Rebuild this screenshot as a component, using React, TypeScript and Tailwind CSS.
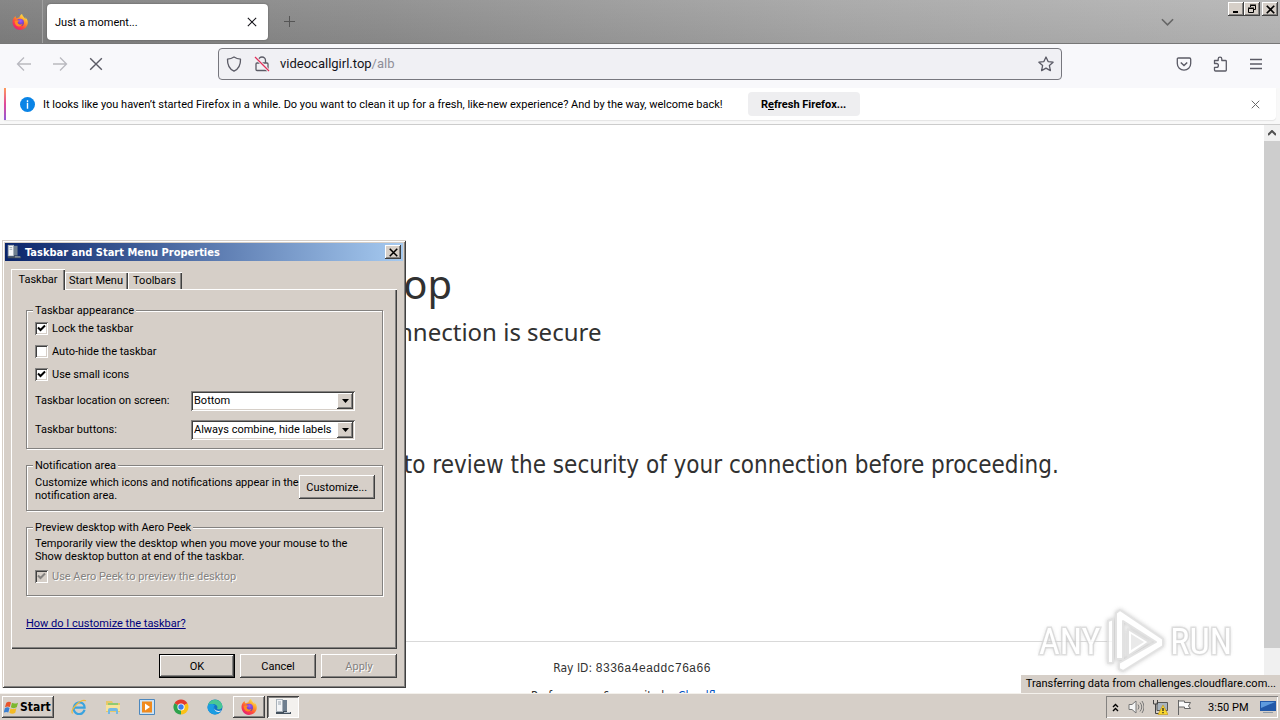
import type { ReactNode } from "react";

const raised =
  "bg-[#d6cfc8] shadow-[inset_-1px_-1px_#404040,inset_1px_1px_#ffffff,inset_-2px_-2px_#848280]";
const windowButton =
  "flex h-[14px] w-4 items-center justify-center bg-[#d6cfc8] shadow-[inset_-1px_-1px_#404040,inset_1px_1px_#ffffff,inset_-2px_-2px_#848280]";

function FirefoxLogo({ className }: { className: string }) {
  return (
    <svg viewBox="0 0 16 16" className={className} aria-hidden="true">
      <defs>
        <linearGradient id="fxBody" x1="0.85" y1="0.05" x2="0.2" y2="1">
          <stop offset="0" stopColor="#fff14f" />
          <stop offset="0.35" stopColor="#ff9a2a" />
          <stop offset="0.65" stopColor="#ff4a3d" />
          <stop offset="1" stopColor="#e3177f" />
        </linearGradient>
        <radialGradient id="fxCore" cx="0.55" cy="0.3" r="0.7">
          <stop offset="0" stopColor="#a05bff" />
          <stop offset="1" stopColor="#5630b5" />
        </radialGradient>
      </defs>
      <path
        d="M15.4 6.2C14.9 5 13.9 3.7 13.1 3.3c.5 1 .7 1.7.7 2C12.600 3.600 10.800 2.800 10 0c-1.800 1-2.500 2.800-2.600 3.600-1 .1-1.900.4-2.500.8C3.900 4 3.500 3 3.600 1.900 2.500 2.600 1.500 3.900.9 5.400c-1.600 5.200 1.800 10.400 7 10.500 5.300.1 9.200-4.700 7.500-9.700z"
        fill="url(#fxBody)"
      />
      <circle cx="8.200" cy="8.400" r="3.700" fill="url(#fxCore)" />
      <path
        d="M2.500 7.500c1.500-1.600 3.600-1.700 5.500-.4-1.700.1-2 .9-2.300 1.600.8 2 3.500 2.300 5 .8-.6 3.600-6.200 4-7.500.3z"
        fill="#ff8a22"
      />
    </svg>
  );
}

function ComputerIcon({ className }: { className: string }) {
  return (
    <svg viewBox="0 0 18 16" className={className} aria-hidden="true">
      <rect x="2.500" y="0.500" width="6" height="12" fill="#f3f5f7" stroke="#a9b2ba" />
      <path d="M4 3h3M4 5h3" stroke="#9aa5b0" />
      <rect x="9" y="1" width="4" height="11" fill="#6f7f8f" />
      <path d="M2 15v-2h7v-1h4v1h4v2z" fill="#43505c" />
      <path d="M10 13.500h6" stroke="#b4bec8" />
    </svg>
  );
}

function Cross({ className, width }: { className: string; width: number }) {
  return (
    <svg viewBox="0 0 12 12" className={className} fill="none" stroke="currentColor" strokeWidth={width} aria-hidden="true">
      <path d="M1 1l10 10M11 1L1 11" />
    </svg>
  );
}

function TitleBar() {
  return (
    <header className="flex h-11 shrink-0 border-b border-[#777] bg-[linear-gradient(182deg,#ffffff26,#00000010),linear-gradient(90deg,#828282,#8c8c8c_30%,#a2a2a2_65%,#aeaeae)]">
      <div className="flex w-[43px] items-center justify-center border-r border-[#a0a0a0] pr-[2px]">
        <FirefoxLogo className="size-4" />
      </div>
      <div className="ml-1 mt-1 flex h-9 w-[221px] items-center justify-between rounded bg-white pl-2 pr-[11px] shadow-[0_0_2px_#555]">
        <span>Just a moment...</span>
        <button aria-label="Close tab" className="text-[#15141a]">
          <Cross className="size-[10px]" width={1.3} />
        </button>
      </div>
      <button aria-label="New tab" className="ml-4 text-[#555]">
        <svg viewBox="0 0 12 12" className="size-3" fill="none" stroke="currentColor" aria-hidden="true">
          <path d="M5.500 0v11M0 5.500h11" />
        </svg>
      </button>
      <button aria-label="List all tabs" className="ml-auto mr-[54px] text-[#666]">
        <svg viewBox="0 0 14 8" className="h-2 w-[13px]" fill="none" stroke="currentColor" strokeWidth="1.700" aria-hidden="true">
          <path d="M1 1l6 6 6-6" />
        </svg>
      </button>
      <div className="mr-[2px] mt-[2px] flex">
        <button aria-label="Minimize" className={windowButton}>
          <svg viewBox="0 0 10 10" className="size-[10px]" aria-hidden="true"><path d="M2 7h5v2H2z" /></svg>
        </button>
        <button aria-label="Restore" className={windowButton}>
          <svg viewBox="0 0 10 10" className="size-[10px]" fill="none" stroke="#000" aria-hidden="true">
            <path d="M3.500 3V1.500h5v4H7M3 1h6M1.500 4.500h5v4h-5zM1 4h6" />
          </svg>
        </button>
        <button aria-label="Close" className={`ml-[2px] ${windowButton}`}>
          <Cross className="size-[9px]" width={2.2} />
        </button>
      </div>
    </header>
  );
}

function NavBar() {
  return (
    <nav className="grid h-11 shrink-0 grid-cols-[218px_minmax(0,1fr)_218px] items-start bg-[#f8f8fb] pt-1 text-[#5b5b66]">
      <div className="flex h-8 items-center gap-5 pl-4">
        <button aria-label="Back" className="text-[#b9b9bf]">
          <svg viewBox="0 0 16 16" className="size-4" fill="none" stroke="currentColor" strokeWidth="1.300" aria-hidden="true"><path d="M15 8H1.500M8 1.500L1.500 8 8 14.500" /></svg>
        </button>
        <button aria-label="Forward" className="text-[#b9b9bf]">
          <svg viewBox="0 0 16 16" className="size-4" fill="none" stroke="currentColor" strokeWidth="1.300" aria-hidden="true"><path d="M1 8h13.500M8 1.500L14.500 8 8 14.500" /></svg>
        </button>
        <button aria-label="Stop" className="pl-px">
          <Cross className="size-[14px]" width={1.2} />
        </button>
      </div>
      <div className="flex h-8 items-center rounded border border-[#77777e] bg-[#f0f0f4] px-[7px]">
        <svg viewBox="0 0 16 16" className="size-4 shrink-0" fill="none" stroke="currentColor" strokeWidth="1.300" aria-hidden="true">
          <path d="M8 1c2 1.300 4 2 6.500 2.200C14.700 9 12.500 13 8 15.200 3.500 13 1.300 9 1.500 3.200 4 3 6 2.300 8 1z" strokeLinejoin="round" />
        </svg>
        <svg viewBox="0 0 16 16" className="ml-3 size-4 shrink-0" fill="none" stroke="currentColor" strokeWidth="1.300" aria-hidden="true">
          <path d="M4.500 7V4.500a3.500 3.500 0 017 0V7M3 7h10q1 0 1 1v5.500q0 1-1 1H3q-1 0-1-1V8q0-1 1-1z" />
          <path d="M1 1l14 14" stroke="#f0f0f4" strokeWidth="3" />
          <path d="M1 1l14 14" stroke="#e2305a" />
        </svg>
        <div className="ml-[10px] min-w-0 flex-1 text-[13px] leading-4 text-[#8f8f98]">
          <span className="text-[#15141a]">videocallgirl.top</span>/alb
        </div>
        <button aria-label="Bookmark this page">
          <svg viewBox="0 0 16 16" className="size-4" fill="none" stroke="currentColor" strokeWidth="1.300" strokeLinejoin="round" aria-hidden="true">
            <path d="M8 1l2.100 4.600 5 .6-3.700 3.400 1 5L8 12.100l-4.400 2.500 1-5L.9 6.200l5-.6z" />
          </svg>
        </button>
      </div>
      <div className="flex h-8 items-center justify-end gap-5 pr-4">
        <button aria-label="Save to Pocket">
          <svg viewBox="0 0 16 16" className="size-4" fill="none" stroke="currentColor" strokeWidth="1.300" aria-hidden="true">
            <path d="M2.500 2h11q1.200 0 1.200 1.200V7.500a6.700 6.700 0 01-13.400 0V3.200Q1.300 2 2.500 2z" />
            <path d="M4.800 6.500L8 9.500l3.200-3" strokeWidth="1.500" />
          </svg>
        </button>
        <button aria-label="Extensions">
          <svg viewBox="0 0 16 16" className="size-4" fill="none" stroke="currentColor" strokeWidth="1.300" strokeLinejoin="round" aria-hidden="true">
            <path d="M2.500 7V4.500h3.700V3a1.800 1.800 0 013.600 0v1.500h3.700q.8 0 .8.800v8.900q0 .8-.8.800h-10q-1 0-1-1v-2.700h2a1.900 1.900 0 000-3.800h-2z" />
          </svg>
        </button>
        <button aria-label="Open application menu">
          <svg viewBox="0 0 16 16" className="size-4" stroke="currentColor" strokeWidth="1.300" aria-hidden="true"><path d="M2 3.500h12M2 8h12M2 12.500h12" /></svg>
        </button>
      </div>
    </nav>
  );
}

function NotificationBar() {
  return (
    <div className="h-[37px] shrink-0 border-b border-[#ccc] bg-[#f8f8f8] pl-1 pr-1">
      <div className="flex h-8 items-center rounded-br bg-white shadow-[0_1px_1px_#e4e4e4]">
        <div className="h-8 w-[2px] bg-[linear-gradient(#ff9a5a,#e0489a,#9059d6)]" />
        <svg viewBox="0 0 16 16" className="ml-[14px] size-[15px]" aria-hidden="true">
          <circle cx="8" cy="8" r="8" fill="#0a84e6" />
          <path d="M8 3.500v2M8 6.500v6" stroke="#fff" strokeWidth="1.500" />
        </svg>
        <p className="ml-2">
          It looks like you haven’t started Firefox in a while. Do you want to clean it up for a fresh, like-new experience? And by the way, welcome back!
        </p>
        <button className="ml-[25px] h-6 w-28 whitespace-nowrap rounded bg-[#eeeef0] text-center font-bold">
          R<span className="underline">e</span>fresh Firefox...
        </button>
        <button aria-label="Dismiss" className="ml-auto mr-4 text-[#666]">
          <Cross className="size-[9px]" width={1.3} />
        </button>
      </div>
    </div>
  );
}

function Watermark() {
  const word =
    "text-white [-webkit-text-stroke:3px_#dedede] [paint-order:stroke_fill] [text-shadow:0_0_4px_#bbb] text-[36px] leading-[48px]";
  return (
    <div className="absolute bottom-[18px] right-12 flex items-center gap-[3px] font-['Roboto_Condensed','Open_Sans_Condensed','Liberation_Sans_Narrow','DejaVu_Sans_Condensed',sans-serif] opacity-80">
      <span className={word}>ANY</span>
      <svg viewBox="0 0 64 66" className="h-[66px] w-16 drop-shadow-[0_0_2px_#bbb]" fill="none" strokeLinejoin="round" aria-hidden="true">
        <path d="M5 54V12l5-2v44z" fill="#fff" stroke="#dcdcdc" strokeWidth="2" />
        <path fillRule="evenodd" d="M13 50V4l4-3 43 29v7L20 62l-4-2v-6l37-21-33-21v38zM25 20l21 13-21 14z" fill="#fff" stroke="#dcdcdc" strokeWidth="2" />
        <path d="M28 25v16l13-8z" fill="#e4e4e4" />
      </svg>
      <span className={word}>RUN</span>
    </div>
  );
}

function WebPage() {
  return (
    <div className="relative flex min-h-0 flex-1 overflow-hidden bg-white">
      <main className="min-w-0 flex-1 whitespace-nowrap pt-[131px] font-['DejaVu_Sans_Condensed','DejaVu_Sans',sans-serif] text-[#313131]">
        <div className="mx-auto w-[960px] max-w-full">
          <div className="font-['Noto_Sans',sans-serif]">
            <h1 className="text-[40px] leading-[56px]">videocallgirl.top</h1>
            <p className="pt-1 text-2xl leading-8">Checking if the site connection is secure</p>
          </div>
          <p className="pt-[101px] text-2xl leading-8">
            videocallgirl.top needs to review the security of your connection before proceeding.
          </p>
        </div>
        <footer className="mx-auto mt-40 w-[960px] max-w-full border-t border-[#d9d9d9] pt-[15px] text-center text-xs leading-[22px]">
          <div>
            Ray ID: <code className="font-['Liberation_Mono',monospace] text-[12px]">8336a4eaddc76a66</code>
          </div>
          <div className="pt-[5px]">
            Performance &amp; security by <a href="#cloudflare" className="text-[#0051c3]">Cloudflare</a>
          </div>
        </footer>
      </main>
      <div className="flex w-4 flex-col bg-[#f0f0f0]">
        <div className="flex h-4 items-center justify-center">
          <svg viewBox="0 0 8 6" className="h-[6px] w-2" fill="none" stroke="#505050" strokeWidth="2" aria-hidden="true"><path d="M0 5l4-4 4 4" /></svg>
        </div>
        <div className="h-[507px] bg-[#cdcdcd]" />
      </div>
      <Watermark />
      <div className="absolute bottom-0 right-0 h-[18px] whitespace-nowrap bg-[#d6cfc8] pl-[5px] pr-1 leading-[18px]">
        Transferring data from challenges.cloudflare.com...
      </div>
    </div>
  );
}

function Check({ id, label, checked, disabled }: { id: string; label: string; checked?: boolean; disabled?: boolean }) {
  return (
    <div className="flex items-center gap-1">
      <span className="grid">
        <input
          id={id}
          type="checkbox"
          defaultChecked={checked}
          disabled={disabled}
          className="peer col-start-1 row-start-1 size-[13px] appearance-none bg-white shadow-[inset_1px_1px_#848280,inset_-1px_-1px_#fff,inset_2px_2px_#404040,inset_-2px_-2px_#d6cfc8] disabled:bg-[#d6cfc8]"
        />
        <svg viewBox="0 0 13 13" className="pointer-events-none invisible col-start-1 row-start-1 size-[13px] text-black peer-checked:visible peer-disabled:text-[#848280]" fill="none" stroke="currentColor" strokeWidth="2" aria-hidden="true">
          <path d="M3 5.500l2.500 2.500L10 3.500" />
        </svg>
      </span>
      <label htmlFor={id} className={disabled ? "text-[#848280] [text-shadow:1px_1px_#fff]" : ""}>{label}</label>
    </div>
  );
}

function Combo({ id, label, options }: { id: string; label: string; options: string[] }) {
  return (
    <div className="flex h-[29px] items-center">
      <label htmlFor={id} className="w-[156px]">{label}</label>
      <span className="grid w-[164px] grid-cols-[minmax(0,1fr)] items-center">
        <select id={id} className="col-start-1 row-start-1 h-5 w-full appearance-none bg-white pl-[3px] pr-[18px] leading-[13px] shadow-[inset_1px_1px_#848280,inset_-1px_-1px_#fff,inset_2px_2px_#404040,inset_-2px_-2px_#d6cfc8]">
          {options.map((o) => <option key={o}>{o}</option>)}
        </select>
        <span className={`pointer-events-none col-start-1 row-start-1 mr-[2px] flex h-4 w-4 items-center justify-center justify-self-end ${raised}`}>
          <svg viewBox="0 0 7 4" className="h-1 w-[7px]" aria-hidden="true"><path d="M0 0h7L3.500 4z" /></svg>
        </span>
      </span>
    </div>
  );
}

function Group({ title, className, children }: { title: string; className: string; children: ReactNode }) {
  return (
    <fieldset className={`min-w-0 border border-[#848280] px-2 shadow-[1px_1px_#fff,inset_1px_1px_#fff] ${className}`}>
      <legend className="-ml-[2px] bg-[#d6cfc8] px-[2px]">{title}</legend>
      {children}
    </fieldset>
  );
}

function PropertiesDialog() {
  const tab = "h-[17px] whitespace-nowrap pr-px shadow-[inset_1px_1px_#fff,inset_-1px_0_#404040,inset_-2px_0_#848280]";
  const button = `h-6 w-[76px] text-center ${raised}`;
  return (
    <section
      aria-label="Taskbar and Start Menu Properties"
      className="absolute left-[2px] top-[240px] w-[404px] bg-[#d6cfc8] p-[3px] leading-[13px] shadow-[inset_1px_1px_#d6cfc8,inset_-1px_-1px_#404040,inset_2px_2px_#fff,inset_-2px_-2px_#848280]"
    >
      <div className="flex h-[18px] items-center bg-[linear-gradient(90deg,#0a246a,#a6caf0)] pl-px pr-[2px] font-bold text-white">
        <ComputerIcon className="h-4 w-4" />
        <h2 className="ml-[3px] flex-1 font-['DejaVu_Sans_Condensed','DejaVu_Sans',sans-serif]">Taskbar and Start Menu Properties</h2>
        <button aria-label="Close dialog" className={`${windowButton} text-black`}>
          <Cross className="size-[9px]" width={2} />
        </button>
      </div>
      <div className="px-[6px] pb-[7px] pt-2">
        <div role="tablist" className="flex items-end">
          <button role="tab" aria-selected="true" className="relative -mb-px h-[21px] w-[54px] bg-[#d6cfc8] pb-px shadow-[inset_1px_1px_#fff,inset_-1px_0_#404040,inset_-2px_0_#848280]">Taskbar</button>
          <button role="tab" aria-selected="false" className={`w-[63px] ${tab}`}>Start Menu</button>
          <button role="tab" aria-selected="false" className={`w-[54px] ${tab}`}>Toolbars</button>
        </div>
        <div className="flex flex-col gap-[10px] pb-[19px] pl-[15px] pr-[14px] pt-[15px] shadow-[inset_1px_1px_#fff,inset_-1px_-1px_#404040,inset_-2px_-2px_#848280]">
          <Group title="Taskbar appearance" className="pb-1">
            <div className="grid auto-rows-[23px] items-center">
              <Check id="lock" label="Lock the taskbar" checked />
              <Check id="autohide" label="Auto-hide the taskbar" />
              <Check id="small" label="Use small icons" checked />
            </div>
            <Combo id="location" label="Taskbar location on screen:" options={["Bottom", "Left", "Right", "Top"]} />
            <Combo id="buttons" label="Taskbar buttons:" options={["Always combine, hide labels", "Combine when taskbar is full", "Never combine"]} />
          </Group>
          <Group title="Notification area" className="pb-2">
            <div className="flex items-start justify-between pr-px pt-[3px]">
              <p className="whitespace-nowrap pt-px">Customize which icons and notifications appear in the<br />notification area.</p>
              <button className={`${button} shrink-0`}>Customize...</button>
            </div>
          </Group>
          <Group title="Preview desktop with Aero Peek" className="pb-3">
            <p className="whitespace-nowrap pb-[7px] pt-[3px]">Temporarily view the desktop when you move your mouse to the<br />Show desktop button at end of the taskbar.</p>
            <Check id="peek" label="Use Aero Peek to preview the desktop" checked disabled />
          </Group>
          <a href="#help" className="mt-[11px] self-start text-[#00007b] underline">How do I customize the taskbar?</a>
        </div>
        <div className="flex justify-end gap-[5px] pt-[5px]">
          <button className="h-6 w-[76px] border border-black bg-[#d6cfc8] text-center shadow-[inset_-1px_-1px_#404040,inset_1px_1px_#ffffff,inset_-2px_-2px_#848280]">OK</button>
          <button className={button}>Cancel</button>
          <button disabled className={`${button} text-[#848280] [text-shadow:1px_1px_#fff]`}>Apply</button>
        </div>
      </div>
    </section>
  );
}

function Taskbar() {
  return (
    <div className="flex h-[27px] shrink-0 items-center border-t border-[#f4f1ec] bg-[#d6cfc8] pl-[2px] pr-[2px]">
      <button className={`flex h-[22px] w-[52px] items-center gap-px pl-[2px] font-['DejaVu_Sans_Condensed','DejaVu_Sans',sans-serif] text-[12px] font-bold ${raised}`}>
        <svg viewBox="0 0 16 16" className="size-[15px] shrink-0" aria-hidden="true">
          <path d="M2.500 3c2-1.500 3.500-1.300 5-.4L6.200 7.500C4.700 6.600 3 6.500 1 7.700z" fill="#e8542a" />
          <path d="M8.500 3c2 1.200 4 1 6.500-.2l-1.400 5c-2 1.200-4.300 1.200-6.300-.1z" fill="#7cb82f" />
          <path d="M.9 8.800c2-1.300 3.600-1.200 5-.3l-1.300 4.800C3 12.300 1.400 12.600-.3 13.500z" fill="#3a80d2" />
          <path d="M7 8.800c2 1.200 4.200 1.200 6.200.1L12 13.600c-2 1.300-4.400 1.200-6.300 0z" fill="#f4bb25" />
        </svg>
        Start
      </button>
      <div className="ml-[17px] flex items-center gap-[18px]">
        <a href="#ie" aria-label="Internet Explorer">
          <svg viewBox="0 0 16 16" className="size-4" fill="none" aria-hidden="true">
            <path d="M13.500 10.800A5.400 5.400 0 112.800 8.600h10.800c.2-7-10-6.800-10.700-.2" stroke="#3aa3df" strokeWidth="2.200" />
            <path d="M1.500 14.500C-1 11 9-.5 15 1.800" stroke="#f0b93a" strokeWidth="1.200" />
          </svg>
        </a>
        <a href="#explorer" aria-label="File Explorer">
          <svg viewBox="0 0 16 16" className="size-4" aria-hidden="true">
            <path d="M1 2h6l1 2h7v9H1z" fill="#e8c868" />
            <path d="M3 4h10v3H3z" fill="#8fca72" /><path d="M1 6h14v6H1z" fill="#f8e39a" />
            <path d="M3 15v-4q0-2 2-2h6q2 0 2 2v4h-2v-3H5v3z" fill="#74b9e4" />
          </svg>
        </a>
        <a href="#player" aria-label="Media Player">
          <svg viewBox="0 0 16 16" className="size-4" aria-hidden="true">
            <path d="M.5.500h15v15H.5z" fill="#cde3f5" stroke="#4c87bd" /><path d="M3 2.500h10v11H3z" fill="#f08a1d" />
            <path d="M6 4.500v7L11 8z" fill="#fff" />
          </svg>
        </a>
        <a href="#chrome" aria-label="Chrome">
          <svg viewBox="0 0 16 16" className="size-4" aria-hidden="true">
            <path d="M8 8L1.500 4.200A7.500 7.500 0 0114.500 4.300z" fill="#e33b2e" />
            <path d="M8 8l6.500-3.700A7.500 7.500 0 018 15.500z" fill="#fbc116" />
            <path d="M8 8v7.500A7.500 7.500 0 011.500 4.200z" fill="#2da24c" />
            <circle cx="8" cy="8" r="3.600" fill="#fff" /><circle cx="8" cy="8" r="2.700" fill="#3b7ded" />
          </svg>
        </a>
        <a href="#edge" aria-label="Edge">
          <svg viewBox="0 0 16 16" className="size-4" aria-hidden="true">
            <circle cx="8" cy="8" r="7.500" fill="#1173c6" />
            <path d="M1 6C3-1 14-1 15.400 7c.2 3-3 4-5.400 3 1.500-3-1-5-4-5-2.200 0-4 .5-5 1z" fill="#48c795" />
            <path d="M1 6c2-1.600 6-1.500 7 .6C6 7.500 6.500 11 9 12.500c2 1 4 .5 5 .1-4 5-13 3-13.500-4z" fill="#1b9de2" />
            <path d="M8 7.500c-2 3 2 5.500 6.500 4-1.500 1.800-4.500 2-6 .5-1.300-1.200-1.500-3-.5-4.500z" fill="#e8f3f8" />
          </svg>
        </a>
      </div>
      <button aria-label="Firefox" className={`ml-[10px] flex h-[22px] w-8 items-center justify-center ${raised}`}>
        <FirefoxLogo className="size-4" />
      </button>
      <button aria-label="Taskbar properties" className="ml-[2px] flex h-[22px] w-8 items-center justify-center bg-[#f3f1ee] shadow-[inset_1px_1px_#404040,inset_-1px_-1px_#fff,inset_2px_2px_#848280]">
        <ComputerIcon className="h-4 w-[18px]" />
      </button>
      <div className="ml-auto flex h-[22px] items-center pl-[6px] pr-[2px] shadow-[inset_1px_1px_#848280,inset_-1px_-1px_#fff]">
        <svg viewBox="0 0 7 9" className="h-[9px] w-[7px]" fill="none" stroke="#000" strokeWidth="1.400" aria-hidden="true"><path d="M1 4l2.500-2.500L6 4M1 8l2.500-2.500L6 8" /></svg>
        <svg viewBox="0 0 16 16" className="ml-[9px] size-4" fill="none" stroke="#777" aria-hidden="true">
          <path d="M1 5.500h3L8 2v12l-4-3.500H1z" fill="#f5f5f5" /><path d="M10 5.500q2 2.500 0 5M12 3.500q3.500 4.500 0 9M14 2q4 6 0 12" />
        </svg>
        <svg viewBox="0 0 16 16" className="ml-2 size-4" aria-hidden="true">
          <path d="M5 3.500h10.500v8H5z" fill="#a9b4be" stroke="#555" /><path d="M1.500 1v4h4V1M3.500 5v9.500H7" fill="none" stroke="#444" />
          <path d="M11 6l5 9.500H6z" fill="#f8d72c" stroke="#c29212" strokeWidth=".6" /><path d="M11 9v3M11 13v1.300" stroke="#222" strokeWidth="1.300" />
        </svg>
        <svg viewBox="0 0 16 16" className="ml-2 size-4" fill="#fafafa" stroke="#666" aria-hidden="true"><path d="M2.500 1v15M2.500 2h6v1.500h6L12.500 7l2 2.500h-6V8h-6z" /></svg>
        <time className="ml-4 w-10 whitespace-nowrap">3:50 PM</time>
        <svg viewBox="0 0 16 14" className="ml-3 h-[14px] w-4" aria-hidden="true">
          <path d="M0 1h16v10H0z" fill="#2259a8" /><path d="M1 2h14L1 8z" fill="#5e9bdd" /><path d="M3 12h10v1H3z" fill="#8f9aa5" />
        </svg>
      </div>
    </div>
  );
}

export default function App() {
  return (
    <div className="relative flex h-screen flex-col overflow-hidden bg-white font-['Roboto',sans-serif] text-[11px] leading-[13px] text-black">
      <TitleBar />
      <NavBar />
      <NotificationBar />
      <WebPage />
      <Taskbar />
      <PropertiesDialog />
    </div>
  );
}
